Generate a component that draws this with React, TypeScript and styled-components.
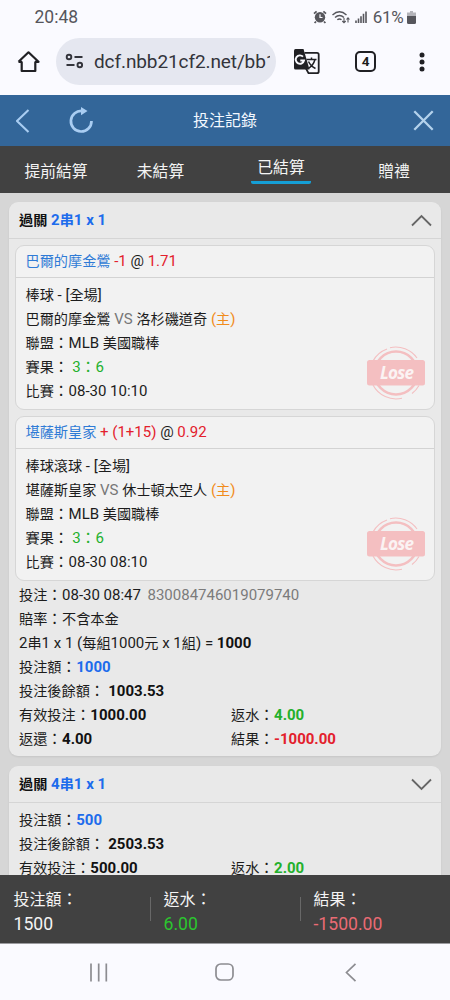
import React from "react";
import styled, { createGlobalStyle } from "styled-components";

const GlobalStyle = createGlobalStyle`
  *, *::before, *::after { box-sizing: border-box; }
  body {
    margin: 0;
    background: #fafaff;
    font-family: Roboto, "Noto Sans CJK TC", sans-serif;
    color: #1c1c1c;
  }
  svg { display: block; flex: none; }
`;

const Screen = styled.div`
  width: 450px;
  height: 1000px;
  display: flex;
  flex-direction: column;
  overflow: hidden;
`;

/* ---------- text: Han runs are set slightly smaller than Latin ones ---------- */
const Han = styled.span`
  font-size: 0.944em;
`;

const Colon = styled.span`
  font-size: 0.98em;
  line-height: 0;
  vertical-align: 0.4px;
`;

const RUNS = /([\u3000-\u9fff]+|：)/;

function Txt({ children }: { children: string }) {
  return (
    <>
      {children.split(RUNS).map((part, i) => {
        if (part === "：") return <Colon key={i}>{part}</Colon>;
        return i % 2 ? <Han key={i}>{part}</Han> : <React.Fragment key={i}>{part}</React.Fragment>;
      })}
    </>
  );
}

/* ---------- phone status bar ---------- */
const StatusBar = styled.div`
  height: 34px;
  padding: 0 34.5px;
  display: flex;
  align-items: center;
  justify-content: space-between;
  color: #56565c;
  font-size: 17.5px;
  line-height: 34px;
`;

const StatusIcons = styled.div`
  display: flex;
  align-items: center;
  gap: 4px;
  font-size: 17px;
`;

const Percent = styled.span`
  margin: 0 -1px 0 2px;
  letter-spacing: -0.25px;
`;

/* ---------- browser bar ---------- */
const BrowserBar = styled.div`
  height: 61px;
  padding: 4px 14px 10px 17px;
  display: flex;
  align-items: center;
`;

const Address = styled.div`
  width: 220px;
  height: 47px;
  margin: 0 17px 0 16px;
  padding: 0 6px 0 9px;
  border-radius: 24px;
  background: #e5e7f0;
  display: flex;
  align-items: center;
  gap: 10px;
`;

const Url = styled.div`
  flex: 1;
  overflow: hidden;
  white-space: nowrap;
  font-size: 19px;
  line-height: 28px;
  letter-spacing: -0.1px;
  color: #33343b;
`;

const TabCount = styled.div`
  width: 21px;
  height: 21px;
  margin: 0 43px 0 35px;
  border: 2px solid #202024;
  border-radius: 5px;
  font-size: 13.5px;
  font-weight: 700;
  line-height: 17px;
  text-align: center;
`;

/* ---------- page header and tabs ---------- */
const Header = styled.header`
  height: 51px;
  padding: 0 16px;
  background: #336699;
  display: grid;
  grid-template-columns: 140px 1fr 140px;
  align-items: center;
`;

const HeaderSide = styled.div<{ $end?: boolean }>`
  display: flex;
  align-items: center;
  gap: 38px;
  justify-content: ${(p) => (p.$end ? "flex-end" : "flex-start")};
`;

const Title = styled.h1`
  margin: 0;
  font-size: 16px;
  font-weight: 400;
  line-height: 24px;
  color: #f2f8ff;
  text-align: center;
`;

const Tabs = styled.nav`
  height: 47px;
  background: #414141;
  display: grid;
  grid-template-columns: 112px 97px 144px 82px;
  justify-items: center;
`;

const Tab = styled.div<{ $active?: boolean }>`
  height: ${(p) => (p.$active ? 38 : 46)}px;
  min-width: ${(p) => (p.$active ? 60 : 0)}px;
  padding-top: ${(p) => (p.$active ? 10 : 14)}px;
  border-bottom: ${(p) => (p.$active ? "3px solid #159fd6" : "none")};
  border-radius: 2px;
  font-size: 15.8px;
  line-height: 24px;
  color: #f4f4f4;
  text-align: center;
`;

/* ---------- records ---------- */
const List = styled.main`
  flex: 1;
  min-height: 0;
  overflow: hidden;
  padding: 9px 9.5px 0 9px;
  background: #d6d6d6;
  display: flex;
  flex-direction: column;
  gap: 10px;
`;

const Card = styled.section`
  flex: none;
  border-radius: 9px;
  background: #e9e9e9;
  box-shadow: 0 1px 2px rgba(0, 0, 0, 0.08);
  font-size: 15px;
  line-height: 23.9px;
`;

const CardHead = styled.div`
  height: 37px;
  padding: 1px 9px 0 10px;
  border-bottom: 1px solid #d5d5d5;
  display: flex;
  align-items: center;
  justify-content: space-between;
  font-weight: 700;
  color: #111;
`;

const Bets = styled.div`
  padding: 6px 6px 0;
  display: flex;
  flex-direction: column;
  gap: 6px;
`;

const Bet = styled.article`
  position: relative;
  height: 165px;
  border: 1px solid #d6d6d6;
  border-radius: 9px;
  background: #f2f2f2;
`;

const BetHead = styled.div`
  height: 32px;
  padding: 0 9.5px;
  border-bottom: 1px solid #d3d3d3;
  line-height: 31px;
`;

const Line = styled.div`
  height: 23.9px;
  white-space: pre;
`;

const BetBody = styled.div`
  padding: 6px 9.5px 0;

  ${Line} {
    height: 24px;
  }
`;

const Summary = styled.div<{ $first?: boolean }>`
  padding: ${(p) => (p.$first ? "3.3px" : "5.5px")} 10px 4.7px;
`;

const Pair = styled.div`
  display: grid;
  grid-template-columns: 212px 1fr;
`;

const Ink = styled.span<{ $c?: string; $b?: boolean }>`
  color: ${(p) => p.$c ?? "inherit"};
  font-weight: ${(p) => (p.$b ? 700 : "inherit")};
`;

const Serial = styled.span`
  margin-left: 6.5px;
  color: #7b7b7b;
`;

const Stamp = styled.div`
  position: absolute;
  right: 8px;
  bottom: 9px;
`;

const StampText = styled.text`
  font: italic 700 17px "Open Sans", sans-serif;
  fill: #fbf3f3;
`;

/* ---------- totals ---------- */
const Totals = styled.footer`
  height: 69px;
  border-bottom: 1px solid #9b9b9f;
  background: #414141;
  display: grid;
  grid-template-columns: repeat(3, 150px);
  align-items: center;
`;

const Total = styled.div`
  height: 24px;
  padding: 6px 0 0 12.5px;
  border-left: 1px solid #686868;
  display: flex;
  flex-direction: column;
  justify-content: center;
  font-size: 16px;
  line-height: 24px;
  color: #f4f4f4;
  &:first-child { border-left-color: transparent; }
`;

const Amount = styled.div<{ $c?: string }>`
  font-size: 17.6px;
  color: ${(p) => p.$c ?? "#f4f4f4"};
`;

const SystemNav = styled.div`
  height: 56px;
  padding: 0 93px 0 88px;
  background: #fafaff;
  display: flex;
  align-items: center;
  justify-content: space-between;
`;

const HomeKey = styled.svg`
  margin-right: 5px;
`;

const BLUE = "#2f7bd6";
const LINK = "#1d6cec";
const RED = "#e3202c";
const GREEN = "#23b02c";

function LoseStamp() {
  return (
    <Stamp>
      <svg width="60" height="54" viewBox="0 0 60 54" fill="none" stroke="#f4bfc1">
        <circle cx="30" cy="27" r="21.5" strokeWidth="2.6" />
        <path d="M7 15A26 26 0 0 1 21 3M24 1.7A26 26 0 0 1 51 12M53 39.5A26 26 0 0 1 46 47.5M36 52.2A26 26 0 0 1 7 39" strokeWidth="1.1" />
        <rect x="1" y="14" width="58" height="25.5" rx="2.5" fill="#f4bfc1" stroke="none" />
        <StampText x="14" y="33" textLength="34" stroke="none">Lose</StampText>
      </svg>
    </Stamp>
  );
}

function Chevron({ up }: { up?: boolean }) {
  return (
    <svg width="21" height="13" viewBox="0 0 21 13" fill="none" stroke="#666" strokeWidth="1.8">
      <path d={up ? "M1 11.5L10.5 2L20 11.5" : "M1 1.5L10.5 11L20 1.5"} />
    </svg>
  );
}

type BetData = { pick: string; line: string; odds: string; kind: string; away: string; home: string; time: string };

function BetCard({ b }: { b: BetData }) {
  return (
    <Bet>
      <BetHead>
        <Ink $c={BLUE}><Txt>{b.pick}</Txt></Ink> <Ink $c={RED}>{b.line}</Ink> @ <Ink $c={RED}>{b.odds}</Ink>
      </BetHead>
      <BetBody>
        <Line><Txt>{b.kind}</Txt></Line>
        <Line>
          <Txt>{b.away}</Txt> <Ink $c="#777">VS</Ink> <Txt>{b.home}</Txt> <Ink $c="#f18c1c"><Txt>(主)</Txt></Ink>
        </Line>
        <Line><Txt>聯盟：MLB 美國職棒</Txt></Line>
        <Line><Txt>賽果：</Txt> <Ink $c={GREEN}><Txt>3：6</Txt></Ink></Line>
        <Line><Txt>{"比賽：" + b.time}</Txt></Line>
      </BetBody>
      <LoseStamp />
    </Bet>
  );
}

const bets: BetData[] = [
  { pick: "巴爾的摩金鶯", line: "-1", odds: "1.71", kind: "棒球 - [全場]", away: "巴爾的摩金鶯", home: "洛杉磯道奇", time: "08-30 10:10" },
  { pick: "堪薩斯皇家", line: "+ (1+15)", odds: "0.92", kind: "棒球滾球 - [全場]", away: "堪薩斯皇家", home: "休士頓太空人", time: "08-30 08:10" },
];

function Field({ label, value, color = "#111" }: { label: string; value: string; color?: string }) {
  return <Line><Txt>{label}</Txt><Ink $b $c={color}>{value}</Ink></Line>;
}

export default function App() {
  return (
    <Screen>
      <GlobalStyle />
      <StatusBar>
        <span>20:48</span>
        <StatusIcons>
          <svg width="14" height="14" viewBox="0 0 14 14">
            <circle cx="7" cy="7.3" r="5.2" fill="#56565c" />
            <path d="M1 3.6L3.6 1.4M13 3.6L10.4 1.4M3 11.5L1.6 13M11 11.5L12.4 13" stroke="#56565c" strokeWidth="1.8" />
            <path d="M7 4.3V7.5H9.5" stroke="#fafaff" strokeWidth="1.2" fill="none" />
          </svg>
          <svg width="20" height="14" viewBox="0 0 20 14" fill="none" stroke="#56565c" strokeWidth="1.4">
            <path d="M1.5 5Q8.5-1.5 15.5 5M4 7.5Q8.5 3.4 13 7.5M6.3 9.8Q8.5 8 10.5 9.8" />
            <path d="M13 8v4.5M11.3 11L13 12.8L14.7 11M17 12.5V8M15.5 9.5L17 7.8L18.5 9.5" strokeWidth="1.1" />
          </svg>
          <svg width="12" height="14" viewBox="0 0 12 14" stroke="#56565c" strokeWidth="1.6">
            <path d="M1 10.5V13M3.5 8.5V13M6 6.3V13M8.5 3.8V13M11 1.5V13" />
          </svg>
          <Percent>61%</Percent>
          <svg width="9" height="13" viewBox="0 0 9 13">
            <path d="M3 0h3v1.5h3V5H0V1.5h3z" fill="#b4b4ba" />
            <path d="M0 5h9v6.5q0 1.5-1.5 1.5h-6Q0 13 0 11.5z" fill="#56565c" />
          </svg>
        </StatusIcons>
      </StatusBar>
      <BrowserBar>
        <svg width="23" height="24" viewBox="0 0 23 24" fill="none" stroke="#202024" strokeWidth="2.2" strokeLinejoin="round">
          <path d="M4.7 11.5V21H18.3V11.5M1.5 11.8L11.5 2.3L21.5 11.8H18M5 11.8H1.5" />
        </svg>
        <Address>
          <svg width="19" height="17" viewBox="0 0 19 17" fill="none" stroke="#33343b" strokeWidth="1.9">
            <circle cx="4" cy="4" r="2.3" />
            <path d="M9.5 4H17.5M1.5 12H9.5" />
            <circle cx="14.8" cy="12" r="2.3" />
          </svg>
          <Url>dcf.nbb21cf2.net/bb1</Url>
        </Address>
        <svg width="27" height="27" viewBox="0 0 27 27">
          <path d="M11.5 4.8H24Q25.7 4.8 25.7 6.5V23.5Q25.7 25.2 24 25.2H15.5L13 20.5" fill="#fafaff" stroke="#202024" strokeWidth="1.8" />
          <path d="M2.5 1H10.5L16.5 21.5H2.5Q1 21.5 1 20V2.5Q1 1 2.5 1z" fill="#202024" />
          <path d="M10 8.7A4.2 4.2 0 1 0 11 12.5H7.3" fill="none" stroke="#fafaff" strokeWidth="1.9" />
          <path d="M13.5 11.5H23.5M18.5 9.5V11.5M15.5 13.5Q17.5 18 22.5 20.5M21.8 12Q20.5 17 15.5 20.5" fill="none" stroke="#202024" strokeWidth="1.5" />
        </svg>
        <TabCount>4</TabCount>
        <svg width="6" height="20" viewBox="0 0 6 20" fill="#202024">
          <circle cx="3" cy="2.9" r="2.5" /><circle cx="3" cy="10" r="2.5" /><circle cx="3" cy="17.1" r="2.5" />
        </svg>
      </BrowserBar>

      <Header>
        <HeaderSide>
          <svg width="15" height="24" viewBox="0 0 15 24" fill="none" stroke="#a9cdf2" strokeWidth="2.1">
            <path d="M12.5 1L1 12L12.5 23" />
          </svg>
          <svg width="26" height="28" viewBox="0 0 26 28" fill="none" stroke="#a9cdf2" strokeWidth="2.7">
            <path d="M13.5 4A10.3 10.3 0 1 0 22.5 14" />
            <path d="M12 0L18.5 4L12 8.2z" fill="#a9cdf2" stroke="none" />
          </svg>
        </HeaderSide>
        <Title>投注記錄</Title>
        <HeaderSide $end>
          <svg width="21" height="21" viewBox="0 0 21 21" stroke="#b4d2ec" strokeWidth="2.3">
            <path d="M1.3 1.3L19.7 19.7M19.7 1.3L1.3 19.7" />
          </svg>
        </HeaderSide>
      </Header>
      <Tabs>
        <Tab>提前結算</Tab>
        <Tab>未結算</Tab>
        <Tab $active>已結算</Tab>
        <Tab>贈禮</Tab>
      </Tabs>

      <List>
        <Card>
          <CardHead>
            <span><Txt>過關</Txt> <Ink $c={LINK}><Txt>2串1 x 1</Txt></Ink></span>
            <Chevron up />
          </CardHead>
          <Bets>{bets.map((b) => <BetCard key={b.pick} b={b} />)}</Bets>
          <Summary $first>
            <Line><Txt>投注：08-30 08:47</Txt><Serial>830084746019079740</Serial></Line>
            <Line><Txt>賠率：不含本金</Txt></Line>
            <Field label="2串1 x 1 (每組1000元 x 1組) = " value="1000" />
            <Field label="投注額：" value="1000" color={LINK} />
            <Field label="投注後餘額： " value="1003.53" />
            <Pair>
              <Field label="有效投注：" value="1000.00" />
              <Field label="返水：" value="4.00" color={GREEN} />
              <Field label="返還：" value="4.00" />
              <Field label="結果：" value="-1000.00" color={RED} />
            </Pair>
          </Summary>
        </Card>
        <Card>
          <CardHead>
            <span><Txt>過關</Txt> <Ink $c={LINK}><Txt>4串1 x 1</Txt></Ink></span>
            <Chevron />
          </CardHead>
          <Summary>
            <Field label="投注額：" value="500" color={LINK} />
            <Field label="投注後餘額： " value="2503.53" />
            <Pair>
              <Field label="有效投注：" value="500.00" />
              <Field label="返水：" value="2.00" color={GREEN} />
            </Pair>
          </Summary>
        </Card>
      </List>

      <Totals>
        <Total>投注額：<Amount>1500</Amount></Total>
        <Total>返水：<Amount $c="#2cc52f">6.00</Amount></Total>
        <Total>結果：<Amount $c="#ea6b74">-1500.00</Amount></Total>
      </Totals>
      <SystemNav>
        <svg width="20" height="19" viewBox="0 0 20 19" stroke="#8c8c91" strokeWidth="1.7">
          <path d="M3 0.5V18.5M10.7 0.5V18.5M18.3 0.5V18.5" />
        </svg>
        <HomeKey width="19" height="18" viewBox="0 0 19 18" fill="none" stroke="#8c8c91" strokeWidth="1.7">
          <rect x="1" y="1" width="17" height="16" rx="4.8" />
        </HomeKey>
        <svg width="12" height="19" viewBox="0 0 12 19" fill="none" stroke="#8c8c91" strokeWidth="1.7">
          <path d="M10.5 0.8L1.5 9.5L10.5 18.2" />
        </svg>
      </SystemNav>
    </Screen>
  );
}
